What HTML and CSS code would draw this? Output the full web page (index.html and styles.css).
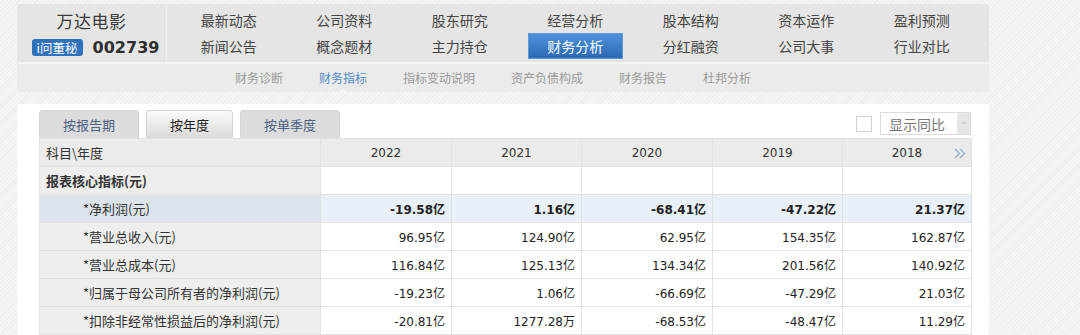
FILE: index.html
```html
<!DOCTYPE html>
<html lang="zh-CN">
<head>
    <meta charset="UTF-8">
    <meta name="viewport" content="width=device-width, initial-scale=1.0">
    <title>万达电影 财务指标</title>
    <link rel="stylesheet" href="styles.css">
</head>
<body>
    <div class="header">
        <div class="top">
            <div class="company">
                <div class="name">万达电影</div>
                <div class="code-row">
                    <span class="badge">i问董秘</span>
                    <span class="code">002739</span>
                </div>
            </div>
            <div class="nav">
                <a>最新动态</a><a>公司资料</a><a>股东研究</a><a>经营分析</a><a>股本结构</a><a>资本运作</a><a>盈利预测</a>
                <a>新闻公告</a><a>概念题材</a><a>主力持仓</a><a class="on">财务分析</a><a>分红融资</a><a>公司大事</a><a>行业对比</a>
            </div>
        </div>
        <div class="subnav">
            <a>财务诊断</a><a class="on">财务指标</a><a>指标变动说明</a><a>资产负债构成</a><a>财务报告</a><a>杜邦分析</a>
        </div>
    </div>

    <div class="main">
        <div class="toolbar">
            <div class="tabs">
                <span class="tab w100">按报告期</span>
                <span class="tab w87 on">按年度</span>
                <span class="tab w100">按单季度</span>
            </div>
            <div class="ctrl">
                <span class="check"></span>
                <span class="select">显示同比<i></i></span>
            </div>
        </div>
        <table class="data">
            <colgroup>
                <col style="width:281px"><col style="width:131px"><col style="width:130px"><col style="width:131px"><col style="width:130px"><col style="width:129px">
            </colgroup>
            <tr class="head">
                <th class="label">科目\年度</th><th>2022</th><th>2021</th><th>2020</th><th>2019</th>
                <th class="last">2018<svg class="more" width="12" height="11" viewBox="0 0 12 11"><path d="M1 1l4.5 4.5L1 10M6 1l4.5 4.5L6 10" fill="none" stroke="#a5b6cb" stroke-width="1.6"/></svg></th>
            </tr>
            <tr class="group">
                <td class="label"><b>报表核心指标(元)</b></td><td></td><td></td><td></td><td></td><td></td>
            </tr>
            <tr class="hl">
                <td class="label sub">*净利润(元)</td><td>-19.58亿</td><td>1.16亿</td><td>-68.41亿</td><td>-47.22亿</td><td>21.37亿</td>
            </tr>
            <tr>
                <td class="label sub">*营业总收入(元)</td><td>96.95亿</td><td>124.90亿</td><td>62.95亿</td><td>154.35亿</td><td>162.87亿</td>
            </tr>
            <tr>
                <td class="label sub">*营业总成本(元)</td><td>116.84亿</td><td>125.13亿</td><td>134.34亿</td><td>201.56亿</td><td>140.92亿</td>
            </tr>
            <tr>
                <td class="label sub">*归属于母公司所有者的净利润(元)</td><td>-19.23亿</td><td>1.06亿</td><td>-66.69亿</td><td>-47.29亿</td><td>21.03亿</td>
            </tr>
            <tr>
                <td class="label sub">*扣除非经常性损益后的净利润(元)</td><td>-20.81亿</td><td>1277.28万</td><td>-68.53亿</td><td>-48.47亿</td><td>11.29亿</td>
            </tr>
        </table>
    </div>
</body>
</html>
```

FILE: styles.css
```css
body {
    margin: 0;
    font-family: "Noto Sans CJK SC", sans-serif;
    color: #333;
    background: repeating-linear-gradient(135deg, #f5f5f5 0, #f5f5f5 2px, #ededed 2px, #ededed 3px);
}

.header {
    margin: 4px 0 0 17px;
    width: 972px;
    border-radius: 3px;
    overflow: hidden;
}
.header .top {
    display: flex;
    height: 58px;
    background: #e5e5e5;
}
.company {
    width: 149px;
    border-right: 1px solid #efefef;
    display: flex;
    flex-direction: column;
    align-items: center;
}
.company .name {
    font-size: 17px;
    line-height: 22px;
    margin-top: 6px;
    color: #3a3a3a;
    letter-spacing: 0.5px;
}
.code-row {
    display: flex;
    align-items: center;
    margin: 6px 0 0 8px;
    gap: 10px;
}
.badge {
    width: 51px;
    text-align: center;
    background: #2f72bb;
    color: #fff;
    font-size: 12.5px;
    line-height: 17px;
    height: 17px;
    border-radius: 3px;
}
.code {
    font-family: "DejaVu Sans", sans-serif;
    font-weight: bold;
    font-size: 16px;
    color: #2e2e2e;
}
.nav {
    display: grid;
    grid-template-columns: repeat(7, 115.5px);
    grid-auto-rows: 26px;
    padding: 3px 0 0 4px;
}
.nav a {
    justify-self: center;
    width: 95px;
    text-align: center;
    font-size: 14px;
    line-height: 26px;
    color: #444;
}
.nav a.on {
    color: #fff;
    background: linear-gradient(#4f93db, #2b68b1);
    box-shadow: inset 0 0 0 1px #5b9ad9;
}
.subnav {
    position: relative;
    display: flex;
    gap: 36px;
    height: 28px;
    padding-left: 218px;
    border-top: 2px solid #f4f4f4;
    background: #ebebeb;
}
.subnav a {
    position: relative;
    font-size: 12px;
    line-height: 27px;
    color: #9a9a9a;
}
.subnav a.on {
    color: #4f8bc9;
}
.subnav a.on::after {
    content: "";
    position: absolute;
    left: 50%;
    bottom: 0;
    margin-left: -4px;
    border: 4px solid transparent;
    border-bottom-color: #f3f3f3;
    border-top: 0;
}

.main {
    margin: 12px 0 0 17px;
    width: 972px;
    padding: 6px 18px 0 22px;
    box-sizing: border-box;
    background: #fff;
}
.toolbar {
    display: flex;
    justify-content: space-between;
    align-items: flex-start;
    height: 28px;
}
.tabs {
    display: flex;
    gap: 7px;
}
.tab {
    height: 28px;
    box-sizing: border-box;
    text-align: center;
    font-size: 13px;
    line-height: 28px;
    color: #4a6185;
    background: #dcdcdc;
    border: 1px solid #d4d4d4;
    border-bottom: 0;
    border-radius: 4px 4px 0 0;
}
.tab.w100 { width: 100px; }
.tab.w87 { width: 87px; }
.tab.on {
    color: #222;
    background: linear-gradient(#fbfbfb, #dadada);
}
.ctrl {
    display: flex;
    align-items: center;
    gap: 8px;
    margin-top: 2px;
}
.check {
    width: 16px;
    height: 16px;
    box-sizing: border-box;
    border: 1px solid #cfcfcf;
}
.select {
    display: flex;
    align-items: center;
    width: 91px;
    height: 23px;
    box-sizing: border-box;
    border: 1px solid #dcdcdc;
    padding-left: 8px;
    font-size: 14px;
    color: #777;
}
.select i {
    margin-left: auto;
    width: 13px;
    height: 100%;
    background: #e6e6e6;
    position: relative;
}
.select i::after {
    content: "";
    position: absolute;
    left: 4px;
    top: 9px;
    border: 3px solid transparent;
    border-top-color: #cfcfcf;
}

table.data {
    border-collapse: collapse;
    table-layout: fixed;
    width: 932px;
}
.data th, .data td {
    height: 27px;
    border: 1px solid #e2e2e2;
    padding: 0 6px;
    font-family: "DejaVu Sans", "Noto Sans CJK SC", sans-serif;
    font-size: 12px;
    text-align: right;
    color: #222;
    white-space: nowrap;
}
.data tr.head th {
    background: #ebebeb;
    text-align: center;
    font-weight: normal;
    color: #333;
}
.data th.last {
    position: relative;
}
.more {
    position: absolute;
    right: 5px;
    top: 9px;
}
.data .label {
    text-align: left;
    background: #eeeeee;
    font-family: "Noto Sans CJK SC", sans-serif;
    font-size: 13px;
    color: #333;
}
.data tr.head th.label {
    text-align: left;
}
.data .label.sub {
    padding-left: 43px;
}
.data tr.hl td {
    background: #e9f0f7;
    font-weight: bold;
}
.data tr.hl td.label {
    background: #dce3eb;
    font-weight: normal;
}
```
